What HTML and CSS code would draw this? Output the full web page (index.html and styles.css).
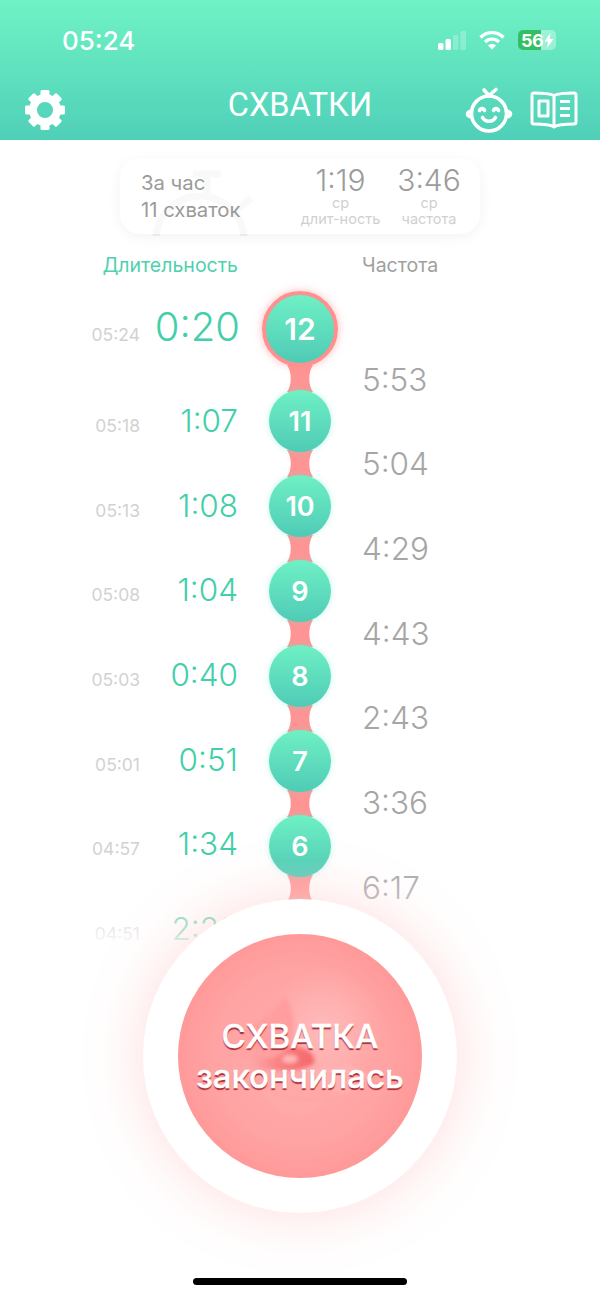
FILE: index.html
```html
<!DOCTYPE html>
<html lang="ru">
<head>
    <meta charset="UTF-8">
    <meta name="viewport" content="width=device-width, initial-scale=1.0">
    <title>Схватки</title>
    <link rel="stylesheet" href="styles.css">
</head>
<body>
    <header class="top">
        <div class="status">
            <span class="clock">05:24</span>
            <div class="status-icons">
                <svg class="signal" width="28" height="19" viewBox="0 0 28 19">
                    <rect x="0" y="12" width="5.500" height="7" rx="1.500" fill="#fff"/>
                    <rect x="7.500" y="8" width="5.500" height="11" rx="1.500" fill="#fff"/>
                    <rect x="15" y="4" width="5.500" height="15" rx="1.500" fill="#fff" opacity=".25"/>
                    <rect x="22.500" y="0" width="5.500" height="19" rx="1.500" fill="#fff" opacity=".25"/>
                </svg>
                <svg class="wifi" width="26" height="20" viewBox="0 0 26 20" fill="none" stroke="#fff" stroke-width="3.400">
                    <path d="M1.500 7.500C8 1 18 1 24.500 7.500"/>
                    <path d="M6 12C10 8.200 16 8.200 20 12"/>
                    <path d="M13 19.500L9 15.600C11.200 13.600 14.800 13.600 17 15.600Z" fill="#fff" stroke="none"/>
                </svg>
                <div class="battery">
                    <span class="battery-num">56</span>
                    <svg class="bolt" width="10" height="15" viewBox="0 0 10 15"><path d="M6.500 0L0.500 8.500H4L3 15L9.500 6H5.500Z" fill="#fff"/></svg>
                </div>
            </div>
        </div>
        <nav class="nav">
            <svg class="gear" width="40" height="40" viewBox="0 0 40 40">
                <defs><rect id="tooth" x="15.500" y="0" width="9" height="9" rx="1.500" fill="#fff"/></defs>
                <use href="#tooth"/>
                <use href="#tooth" transform="rotate(45 20 20)"/>
                <use href="#tooth" transform="rotate(90 20 20)"/>
                <use href="#tooth" transform="rotate(135 20 20)"/>
                <use href="#tooth" transform="rotate(180 20 20)"/>
                <use href="#tooth" transform="rotate(225 20 20)"/>
                <use href="#tooth" transform="rotate(270 20 20)"/>
                <use href="#tooth" transform="rotate(315 20 20)"/>
                <circle cx="20" cy="20" r="12" fill="none" stroke="#fff" stroke-width="8"/>
            </svg>
            <h1 class="title">СХВАТКИ</h1>
            <div class="nav-right">
                <svg class="baby" width="48" height="48" viewBox="0 0 48 48" fill="none" stroke="#fff" stroke-width="3.600" stroke-linecap="round">
                    <circle cx="24" cy="27.500" r="17.500"/>
                    <path d="M6.500 25C4 25.500 2.500 26.500 2.500 28S4 30.500 6.500 31"/>
                    <path d="M41.500 25C44 25.500 45.500 26.500 45.500 28S44 30.500 41.500 31"/>
                    <path d="M24 9.500L19 4M24 9.500L31 3.500"/>
                    <path d="M14.500 24.500C15.500 22 18.500 22 19.500 24.500"/>
                    <path d="M28.500 24.500C29.500 22 32.500 22 33.500 24.500"/>
                    <path d="M17.500 31.500C20 36.500 28 36.500 30.500 31.500"/>
                </svg>
                <svg class="book" width="48" height="38" viewBox="0 0 48 38" fill="none" stroke="#fff" stroke-width="3" stroke-linejoin="round">
                    <path d="M24 4.500C21 3 12 2 4 2Q2 2 2 4V31Q2 33 4 33C12 33 20 33 24 36C28 33 36 33 44 33Q46 33 46 31V4Q46 2 44 2C36 2 27 3 24 4.500Z"/>
                    <path d="M24 4.500V36"/>
                    <rect x="9" y="10" width="9" height="15"/>
                    <path d="M30 10.500H40M30 17.500H40M30 24.500H40"/>
                </svg>
            </div>
        </nav>
    </header>

    <main class="content">
        <svg class="watermark" width="110" height="70" viewBox="0 0 110 70" fill="none" stroke="#f0f0f0" stroke-width="7">
            <circle cx="55" cy="74" r="44"/>
            <path d="M48 8H76M62 8V30M92 44L106 32"/>
        </svg>
        <section class="summary">
            <div class="summary-hour">
                <span>За час</span>
                <span>11 схваток</span>
            </div>
            <div class="summary-stats">
                <div class="stat stat-len">
                    <span class="stat-num">1:19</span>
                    <span class="stat-label">ср</span>
                    <span class="stat-label">длит-ность</span>
                </div>
                <div class="stat stat-freq">
                    <span class="stat-num">3:46</span>
                    <span class="stat-label">ср</span>
                    <span class="stat-label">частота</span>
                </div>
            </div>
        </section>

        <div class="heads">
            <span class="head-len">Длительность</span>
            <span class="head-freq">Частота</span>
        </div>

        <div class="timeline">
            <div class="col-left">
                <div class="row row-first"><span class="at">05:24</span><span class="dur dur-big">0:20</span></div>
                <div class="row"><span class="at">05:18</span><span class="dur">1:07</span></div>
                <div class="row"><span class="at">05:13</span><span class="dur">1:08</span></div>
                <div class="row"><span class="at">05:08</span><span class="dur">1:04</span></div>
                <div class="row"><span class="at">05:03</span><span class="dur">0:40</span></div>
                <div class="row"><span class="at">05:01</span><span class="dur">0:51</span></div>
                <div class="row"><span class="at">04:57</span><span class="dur">1:34</span></div>
                <div class="row"><span class="at">04:51</span><span class="dur">2:29</span></div>
            </div>
            <div class="col-mid">
                <div class="dot dot-first">12</div>
                <svg class="link" viewBox="0 0 26 27" preserveAspectRatio="none"><path d="M0 0H26C21 7 21 20 26 27H0C5 20 5 7 0 0Z"/></svg>
                <div class="dot">11</div>
                <svg class="link" viewBox="0 0 26 27" preserveAspectRatio="none"><path d="M0 0H26C21 7 21 20 26 27H0C5 20 5 7 0 0Z"/></svg>
                <div class="dot">10</div>
                <svg class="link" viewBox="0 0 26 27" preserveAspectRatio="none"><path d="M0 0H26C21 7 21 20 26 27H0C5 20 5 7 0 0Z"/></svg>
                <div class="dot">9</div>
                <svg class="link" viewBox="0 0 26 27" preserveAspectRatio="none"><path d="M0 0H26C21 7 21 20 26 27H0C5 20 5 7 0 0Z"/></svg>
                <div class="dot">8</div>
                <svg class="link" viewBox="0 0 26 27" preserveAspectRatio="none"><path d="M0 0H26C21 7 21 20 26 27H0C5 20 5 7 0 0Z"/></svg>
                <div class="dot">7</div>
                <svg class="link" viewBox="0 0 26 27" preserveAspectRatio="none"><path d="M0 0H26C21 7 21 20 26 27H0C5 20 5 7 0 0Z"/></svg>
                <div class="dot">6</div>
                <svg class="link" viewBox="0 0 26 27" preserveAspectRatio="none"><path d="M0 0H26C21 7 21 20 26 27H0C5 20 5 7 0 0Z"/></svg>
                <div class="dot">5</div>
            </div>
            <div class="col-right">
                <span class="freq">5:53</span>
                <span class="freq">5:04</span>
                <span class="freq">4:29</span>
                <span class="freq">4:43</span>
                <span class="freq">2:43</span>
                <span class="freq">3:36</span>
                <span class="freq">6:17</span>
            </div>
        </div>
        <div class="fade"></div>
    </main>

    <div class="big-btn">
        <div class="big-inner">
            <svg class="swirl" width="244" height="244" viewBox="0 0 244 244" fill="none">
                <defs>
                    <linearGradient id="shade" x1="0" y1="0" x2="1" y2="0">
                        <stop offset="0" stop-color="#ff8d8e" stop-opacity="0"/>
                        <stop offset="1" stop-color="#ff8d8e" stop-opacity=".55"/>
                    </linearGradient>
                    <linearGradient id="patch" x1="0" y1="0" x2="1" y2="0">
                        <stop offset="0" stop-color="#f5686b" stop-opacity="0"/>
                        <stop offset=".6" stop-color="#f5686b" stop-opacity=".8"/>
                        <stop offset="1" stop-color="#f5686b"/>
                    </linearGradient>
                </defs>
                <path d="M107 62C116 78 118 90 114 108C110 118 104 122 100 126C85 126 65 124 50 120C60 100 90 85 107 62Z" fill="url(#shade)"/>
                <path d="M72 122C100 130 104 118 112 113C125 111 136 118 137 128C128 137 105 140 72 132Z" fill="url(#patch)"/>
                <ellipse cx="112" cy="125" rx="8" ry="4.500" fill="#ffb8b8"/>
                <path d="M136 141C148 124 165 122 192 142C180 165 150 168 136 141Z" fill="#ffb4b4" opacity=".6"/>
                <path d="M80 150C95 165 120 175 150 165C130 190 95 185 80 150Z" fill="#ffb0b0" opacity=".45"/>
            </svg>
            <span class="big-text">СХВАТКА<br>закончилась</span>
        </div>
    </div>

    <div class="home-bar"></div>
</body>
</html>
```

FILE: styles.css
```css
body {
    margin: 0;
    width: 600px;
    height: 1297px;
    position: relative;
    overflow: hidden;
    background-color: #fff;
    font-family: 'Inter', 'Liberation Sans', sans-serif;
}

/* header */
.top {
    height: 140px;
    background: linear-gradient(180deg, #6ff3c5 0%, #50cfb8 100%);
    color: #fff;
}
.status {
    height: 80px;
    display: flex;
    justify-content: space-between;
    align-items: center;
    padding: 0 44px 0 62px;
}
.clock {
    font-size: 26px;
    font-weight: 500;
}
.status-icons {
    display: flex;
    align-items: center;
    gap: 13px;
}
.battery {
    width: 38px;
    height: 20px;
    border-radius: 5px;
    display: flex;
    align-items: center;
    background: linear-gradient(90deg, #35bf63 0%, #35bf63 60%, rgba(255,255,255,0.35) 60%);
}
.battery-num {
    font-size: 18px;
    font-weight: 700;
    padding-left: 3px;
    letter-spacing: -0.5px;
}
.bolt {
    margin-left: 1px;
}
.nav {
    height: 60px;
    display: flex;
    justify-content: space-between;
    align-items: center;
    padding: 0 22px 10px 25px;
    position: relative;
}
.title {
    position: absolute;
    left: 0;
    right: 0;
    top: 6px;
    margin: 0;
    text-align: center;
    font-family: 'Roboto', sans-serif;
    font-size: 32.5px;
    font-weight: 400;
    line-height: 38px;
}
.nav-right {
    display: flex;
    align-items: center;
    gap: 17px;
}

/* summary card */
.content {
    position: relative;
    height: 820px;
    overflow: hidden;
}
.watermark {
    position: absolute;
    left: 145px;
    top: 26px;
}
.summary {
    position: relative;
    width: 360px;
    height: 76px;
    margin: 18px auto 0;
    box-sizing: border-box;
    padding: 0 21px;
    display: flex;
    justify-content: space-between;
    align-items: center;
    background-color: rgba(255, 255, 255, 0.6);
    border-radius: 20px;
    box-shadow: 0 3px 14px rgba(0, 0, 0, 0.05);
}
.summary-hour {
    display: flex;
    flex-direction: column;
    gap: 5px;
    font-size: 20.3px;
    line-height: 22px;
    color: #9a9a9a;
}
.summary-stats {
    display: flex;
    gap: 19px;
}
.stat {
    display: flex;
    flex-direction: column;
    align-items: center;
}
.stat-len {
    width: 79px;
}
.stat-freq {
    width: 60px;
}
.stat-num {
    font-size: 30px;
    font-weight: 300;
    line-height: 30px;
    color: #9c9c9c;
}
.stat-label {
    font-size: 14.5px;
    line-height: 16px;
    white-space: nowrap;
    color: #d0d0d0;
}

/* column titles */
.heads {
    margin-top: 21px;
    height: 20px;
    line-height: 20px;
    font-size: 19.5px;
    display: flex;
}
.head-len {
    width: 238px;
    text-align: right;
    color: #4fd0ae;
}
.head-freq {
    margin-left: 124px;
    color: #a0a0a0;
}

/* timeline */
.timeline {
    margin-top: 16px;
    display: flex;
}
.col-left {
    width: 238px;
    display: flex;
    flex-direction: column;
}
.row {
    height: 62px;
    margin-top: 22.67px;
    display: flex;
    justify-content: flex-end;
    align-items: center;
}
.row-first {
    height: 76px;
    margin-top: 0;
}
.at {
    width: 140px;
    text-align: right;
    font-size: 17.5px;
    color: #d2d2d2;
    margin-right: auto;
    padding-top: 10px;
}
.dur {
    font-size: 31.5px;
    font-weight: 350;
    color: #42cfa9;
}
.dur-big {
    font-size: 40px;
    margin-bottom: 6px;
    margin-right: -2px;
}
.col-mid {
    width: 124px;
    display: flex;
    flex-direction: column;
    align-items: center;
}
.dot {
    width: 62px;
    height: 62px;
    flex: none;
    border-radius: 50%;
    display: flex;
    justify-content: center;
    align-items: center;
    position: relative;
    background: linear-gradient(180deg, #6ff0c4 0%, #4fcbb6 100%);
    box-shadow: 0 0 6px rgba(95, 235, 200, 0.4);
    color: #fff;
    font-size: 27px;
    font-weight: 600;
}
.dot-first {
    width: 68px;
    height: 68px;
    border: 4px solid #ff9090;
    box-shadow: 0 0 8px rgba(255, 140, 140, 0.6);
    font-size: 30px;
}
.link {
    width: 26px;
    height: 27px;
    flex: none;
    margin: -2px 0;
    fill: #ff9494;
}
.col-right {
    padding-top: 46.67px;
    display: flex;
    flex-direction: column;
}
.freq {
    height: 84.67px;
    line-height: 84.67px;
    font-size: 31.5px;
    font-weight: 350;
    color: #a6a6a6;
}
.fade {
    position: absolute;
    left: 0;
    right: 0;
    top: 720px;
    height: 90px;
    background: linear-gradient(180deg, rgba(255,255,255,0) 0%, rgba(255,255,255,0.55) 78%, #fff 100%);
}

/* main button */
.big-btn {
    position: absolute;
    left: 143px;
    top: 899px;
    width: 314px;
    height: 314px;
    border-radius: 50%;
    background-color: #fff;
    display: flex;
    justify-content: center;
    align-items: center;
    box-shadow: 0 0 60px rgba(255, 130, 130, 0.28);
}
.big-inner {
    width: 244px;
    height: 244px;
    border-radius: 50%;
    position: relative;
    overflow: hidden;
    display: flex;
    justify-content: center;
    align-items: center;
    background:
        radial-gradient(circle at 60% 38%, rgba(255, 190, 190, 0.8) 0%, rgba(255, 180, 180, 0) 28%),
        radial-gradient(circle at 50% 50%, #ffacac 0%, #ffa3a3 50%, #ff8b8c 100%);
}
.swirl {
    position: absolute;
    left: 0;
    top: 0;
    filter: blur(2px);
}
.big-text {
    position: relative;
    text-align: center;
    color: #fff;
    font-size: 33px;
    font-weight: 500;
    line-height: 40px;
    -webkit-text-stroke: 0.4px #fff;
    text-shadow: 0 2px 1px #a82a34;
}

.home-bar {
    position: absolute;
    left: 193px;
    top: 1278px;
    width: 214px;
    height: 7px;
    border-radius: 4px;
    background-color: #000;
}
```
